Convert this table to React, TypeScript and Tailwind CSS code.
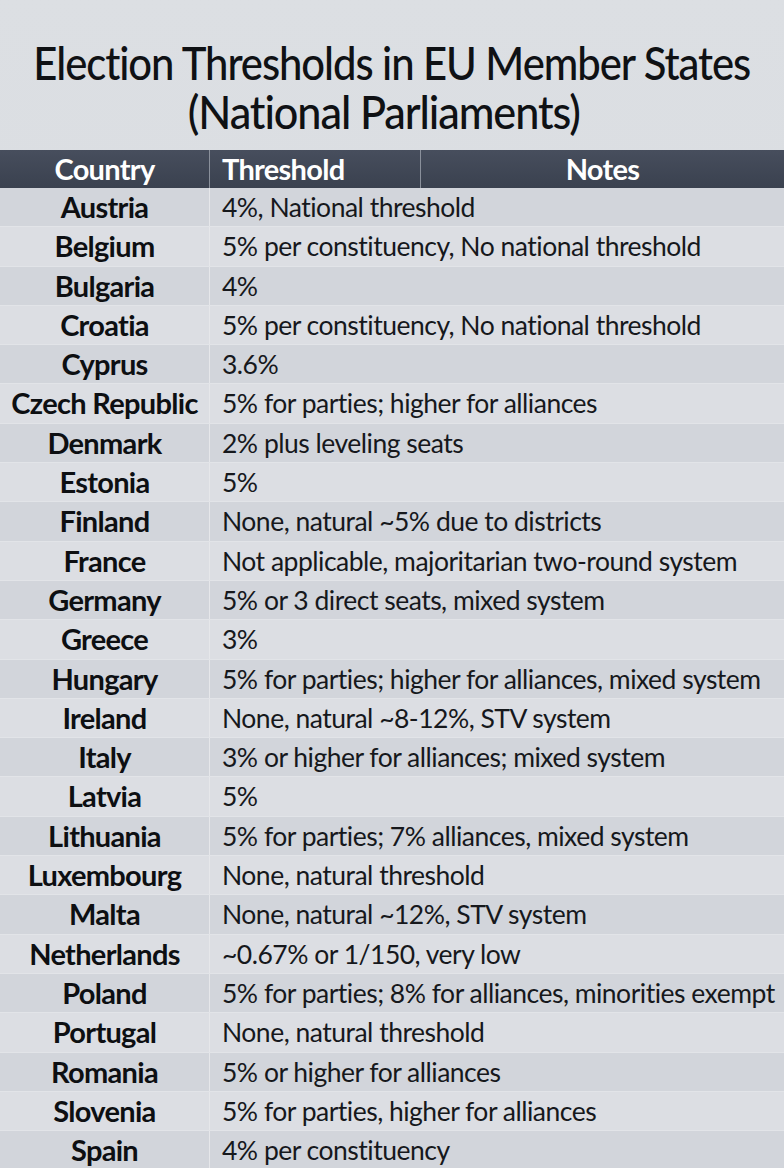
import React from 'react';

interface Row {
    country: string;
    notes: string;
}

const rows: Row[] = [
    { country: 'Austria', notes: '4%, National threshold' },
    { country: 'Belgium', notes: '5% per constituency, No national threshold' },
    { country: 'Bulgaria', notes: '4%' },
    { country: 'Croatia', notes: '5% per constituency, No national threshold' },
    { country: 'Cyprus', notes: '3.6%' },
    { country: 'Czech Republic', notes: '5% for parties; higher for alliances' },
    { country: 'Denmark', notes: '2% plus leveling seats' },
    { country: 'Estonia', notes: '5%' },
    { country: 'Finland', notes: 'None, natural ~5% due to districts' },
    { country: 'France', notes: 'Not applicable, majoritarian two-round system' },
    { country: 'Germany', notes: '5% or 3 direct seats, mixed system' },
    { country: 'Greece', notes: '3%' },
    { country: 'Hungary', notes: '5% for parties; higher for alliances, mixed system' },
    { country: 'Ireland', notes: 'None, natural ~8-12%, STV system' },
    { country: 'Italy', notes: '3% or higher for alliances; mixed system' },
    { country: 'Latvia', notes: '5%' },
    { country: 'Lithuania', notes: '5% for parties; 7% alliances, mixed system' },
    { country: 'Luxembourg', notes: 'None, natural threshold' },
    { country: 'Malta', notes: 'None, natural ~12%, STV system' },
    { country: 'Netherlands', notes: '~0.67% or 1/150, very low' },
    { country: 'Poland', notes: '5% for parties; 8% for alliances, minorities exempt' },
    { country: 'Portugal', notes: 'None, natural threshold' },
    { country: 'Romania', notes: '5% or higher for alliances' },
    { country: 'Slovenia', notes: '5% for parties, higher for alliances' },
    { country: 'Spain', notes: '4% per constituency' },
];

export default function App() {
    return (
        <div
            className="w-[784px] h-[1168px] overflow-hidden bg-gradient-to-b from-[#dcdfe3] to-[#d6d9de] text-[#16181c]"
            style={{ fontFamily: 'Lato, "Open Sans", sans-serif' }}
        >
            <h1 className="pt-[38px] pb-[14px] flex flex-col items-center text-[47px] leading-[49px] font-medium tracking-[-1.2px] text-[#0f1114]">
                <span className="inline-block whitespace-nowrap scale-x-[0.89]">
                    Election Thresholds in EU Member States
                </span>
                <span className="inline-block whitespace-nowrap scale-x-[0.92] pr-[18px]">
                    (National Parliaments)
                </span>
            </h1>

            <div className="grid grid-cols-[210px_211px_1fr] h-[38px] bg-gradient-to-b from-[#474e5d] to-[#3a414f] text-white text-[29px] font-bold tracking-[-0.7px] leading-[37px]">
                <div className="text-center border-r border-[#8a909b]">Country</div>
                <div className="pl-[12px] border-r border-[#8a909b]">Threshold</div>
                <div className="text-center">Notes</div>
            </div>

            <div className="flex flex-col">
                {rows.map((row, i) => (
                    <div
                        key={row.country}
                        className={
                            'grid grid-cols-[210px_1fr] h-[39.3px] border-b border-[#e2e4e8] ' +
                            (i % 2 === 0 ? 'bg-[#d2d5db]' : 'bg-[#dcdee3]')
                        }
                    >
                        <div className="text-center text-[29px] font-bold tracking-[-0.7px] leading-[38px] text-[#0d0f12] border-r border-[#e6e7ea] whitespace-nowrap">
                            {row.country}
                        </div>
                        <div className="pl-[12px] text-[26.5px] tracking-[-0.5px] leading-[38px] whitespace-nowrap">
                            {row.notes}
                        </div>
                    </div>
                ))}
            </div>
        </div>
    );
}
